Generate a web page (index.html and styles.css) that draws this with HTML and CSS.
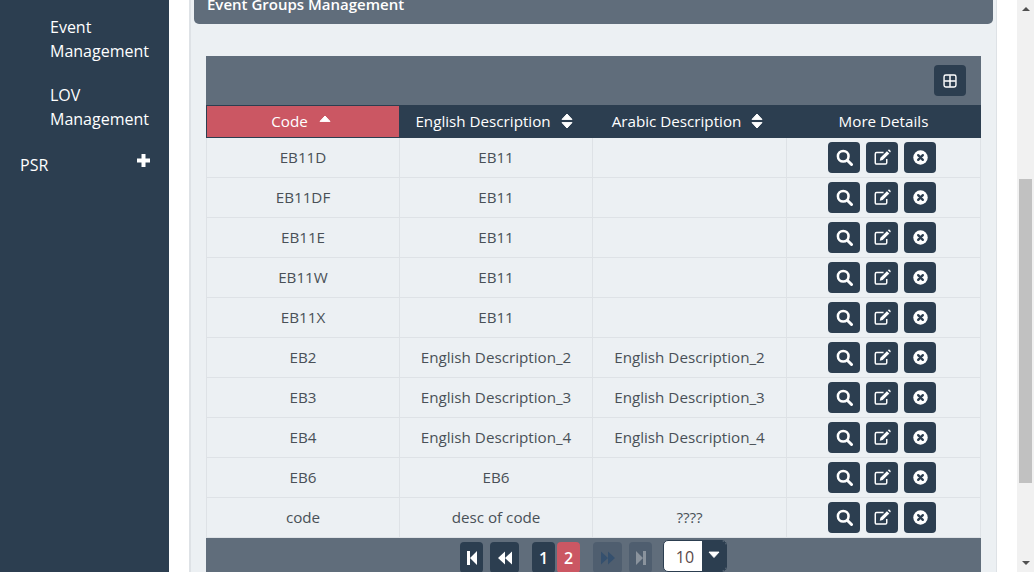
FILE: index.html
```html
<!DOCTYPE html>
<html>

<head>
    <meta name="viewport" content="width=device-width">
    <link rel="stylesheet" href="styles.css">
    <title>Event Groups Management</title>
</head>

<body>
    <svg class="defs" width="0" height="0">
        <symbol id="i-search" viewBox="0 0 16 16">
            <circle cx="6.8" cy="6.8" r="5" fill="none" stroke="currentColor" stroke-width="2.4"/>
            <path d="M10.6 10.6L14.6 14.6" stroke="currentColor" stroke-width="2.8" stroke-linecap="round"/>
        </symbol>
        <symbol id="i-edit" viewBox="0 0 16 16">
            <path d="M12 9.5V13a1.2 1.2 0 0 1-1.2 1.2H2.4A1.2 1.2 0 0 1 1.2 13V4.6a1.2 1.2 0 0 1 1.2-1.2H9" fill="none" stroke="currentColor" stroke-width="1.4"/>
            <path d="M6 8.2L12.2 2l2.2 2.2-6.2 6.2-2.8.6z" fill="currentColor"/>
            <path d="M13 1.2l.5-.4a.9.9 0 0 1 1.2 0l.8.8a.9.9 0 0 1 0 1.2l-.4.5z" fill="currentColor"/>
        </symbol>
        <symbol id="i-times" viewBox="0 0 16 16">
            <circle cx="8" cy="8" r="6.800" fill="currentColor"/>
            <path d="M5.800 5.800l4.400 4.400M10.200 5.800l-4.400 4.400" stroke="#2c3e50" stroke-width="2.2" stroke-linecap="round"/>
        </symbol>
        <symbol id="i-plus-square" viewBox="0 0 16 16">
            <rect x="1.2" y="1.2" width="13.6" height="13.6" rx="2" fill="none" stroke="currentColor" stroke-width="1.6"/>
            <path d="M8 1.5v13M1.500 8h13" stroke="currentColor" stroke-width="1.7"/>
        </symbol>
        <symbol id="i-plus" viewBox="0 0 13 13">
            <path d="M6.500 0.500v12M0.500 6.500h12" stroke="currentColor" stroke-width="4" stroke-linecap="round"/>
        </symbol>
        <symbol id="i-sort" viewBox="0 0 12 16">
            <path d="M6 1L11 6.4H1zM6 15L1 9.6H11z" fill="currentColor" stroke="currentColor" stroke-linejoin="round"/>
        </symbol>
        <symbol id="i-up" viewBox="0 0 12 8">
            <path d="M6 1L11 6.400H1z" fill="currentColor" stroke="currentColor" stroke-linejoin="round"/>
        </symbol>
        <symbol id="i-down" viewBox="0 0 12 8">
            <path d="M6 6.500L11 1.100H1z" fill="currentColor" stroke="currentColor" stroke-linejoin="round"/>
        </symbol>
        <symbol id="i-first" viewBox="0 0 12 16">
            <path d="M1 1h3v14H1zM4 8l7-7v14z" fill="currentColor"/>
        </symbol>
        <symbol id="i-prev" viewBox="0 0 16 16">
            <path d="M1 8l7-6.500V14.500zM8 8l7-6.500V14.500z" fill="currentColor"/>
        </symbol>
        <symbol id="i-next" viewBox="0 0 16 16">
            <path d="M15 8L8 1.500V14.500zM8 8L1 1.500V14.500z" fill="currentColor"/>
        </symbol>
        <symbol id="i-last" viewBox="0 0 12 16">
            <path d="M11 1H8v14h3zM8 8L1 1v14z" fill="currentColor"/>
        </symbol>
    </svg>

    <div class="page">
        <nav class="sidebar">
            <a class="sub-link">Event Management</a>
            <a class="sub-link">LOV Management</a>
            <a class="top-link">
                <span>PSR</span>
                <svg class="plus"><use href="#i-plus"/></svg>
            </a>
        </nav>

        <main class="content">
            <div class="title-bar"><span>Event Groups Management</span></div>

            <section class="grid">
                <div class="toolbar">
                    <button class="btn"><svg class="icon-sm"><use href="#i-plus-square"/></svg></button>
                </div>
                <table>
                    <colgroup>
                        <col class="col-a">
                        <col class="col-a">
                        <col class="col-b">
                        <col class="col-b">
                    </colgroup>
                    <thead>
                        <tr>
                            <th class="sorted">Code <svg class="sort-up"><use href="#i-up"/></svg></th>
                            <th class="sortable">English Description <svg class="sort"><use href="#i-sort"/></svg></th>
                            <th class="sortable">Arabic Description <svg class="sort"><use href="#i-sort"/></svg></th>
                            <th>More Details</th>
                        </tr>
                    </thead>
                    <tbody id="rows"></tbody>
                </table>
                <div class="pager">
                    <button class="pg pg-first"><svg class="pg-icon-s"><use href="#i-first"/></svg></button>
                    <button class="pg pg-prev"><svg class="pg-icon"><use href="#i-prev"/></svg></button>
                    <button class="pg pg-num">1</button>
                    <button class="pg pg-num active">2</button>
                    <button class="pg pg-next" disabled><svg class="pg-icon"><use href="#i-next"/></svg></button>
                    <button class="pg pg-last" disabled><svg class="pg-icon-s"><use href="#i-last"/></svg></button>
                    <div class="per-page">
                        <span class="per-value">10</span>
                        <span class="per-arrow"><svg class="caret"><use href="#i-down"/></svg></span>
                    </div>
                </div>
            </section>
        </main>

        <div class="gutter"></div>

        <div class="scrollbar">
            <span class="sb-arrow up"></span>
            <div class="sb-track"><div class="sb-thumb"></div></div>
            <span class="sb-arrow down"></span>
        </div>
    </div>

    <script>
        var data = [
            ['EB11D', 'EB11', ''],
            ['EB11DF', 'EB11', ''],
            ['EB11E', 'EB11', ''],
            ['EB11W', 'EB11', ''],
            ['EB11X', 'EB11', ''],
            ['EB2', 'English Description_2', 'English Description_2'],
            ['EB3', 'English Description_3', 'English Description_3'],
            ['EB4', 'English Description_4', 'English Description_4'],
            ['EB6', 'EB6', ''],
            ['code', 'desc of code', '????']
        ];
        var actions = ['i-search', 'i-edit', 'i-times'].map(function (id) {
            return '<button class="btn"><svg class="icon"><use href="#' + id + '"/></svg></button>';
        }).join('');
        document.getElementById('rows').innerHTML = data.map(function (row) {
            return '<tr><td>' + row[0] + '</td><td>' + row[1] + '</td><td>' + row[2] + '</td>' +
                '<td class="actions-cell"><div class="actions">' + actions + '</div></td></tr>';
        }).join('');
    </script>
</body>

</html>
```

FILE: styles.css
```css
html, body {
    margin: 0;
    height: 572px;
    overflow: hidden;
}

body {
    font-family: "Open Sans", sans-serif;
    font-size: 16px;
    color: #495057;
    background: #fff;
}

.defs {
    display: block;
    height: 0;
}

.page {
    display: flex;
    height: 572px;
}

/* sidebar */
.sidebar {
    flex: 0 0 169px;
    box-sizing: border-box;
    padding-top: 15px;
    margin-right: 20px;
    background: #2c3e50;
    color: #fff;
    line-height: 24px;
}

.sub-link {
    display: block;
    padding: 0 15px 20px 50px;
}

.top-link {
    display: flex;
    justify-content: space-between;
    padding: 0 19px 0 20px;
    margin-top: 2px;
}

.plus {
    width: 13px;
    height: 13px;
    margin-top: 1px;
}

/* content */
.content {
    flex: 0 0 808px;
    min-width: 0;
    box-sizing: border-box;
    height: 572px;
    padding: 0 3px;
    background: #ecf0f3;
    border-left: 2px solid #dee2e6;
    border-right: 1px solid #dee2e6;
}

.title-bar {
    display: flex;
    align-items: flex-end;
    height: 24px;
    overflow: hidden;
    padding-left: 13px;
    background: #606d7b;
    border-radius: 0 0 5px 5px;
    color: #fff;
    font-weight: 600;
    font-size: 15px;
}

.title-bar span {
    line-height: 20px;
    margin-bottom: 10px;
    white-space: nowrap;
}

.grid {
    margin: 32px 12px 0;
}

.toolbar {
    display: flex;
    justify-content: flex-end;
    box-sizing: border-box;
    height: 49px;
    padding: 9px 15px 0 0;
    background: #606d7b;
}

.btn {
    display: inline-flex;
    align-items: center;
    justify-content: center;
    width: 32px;
    height: 31px;
    padding: 0;
    border: 0;
    border-radius: 4px;
    background: #2c3e50;
    color: #fff;
}

.icon {
    width: 17px;
    height: 17px;
}

.icon-sm {
    width: 14px;
    height: 14px;
}

/* table */
table {
    width: 775px;
    border-collapse: collapse;
    table-layout: fixed;
}

.col-a { width: 193px; }
.col-b { width: 194px; }

th {
    box-sizing: border-box;
    height: 32px;
    padding: 0 0 1px;
    background: #2c3e50;
    border: 1px solid #2c3e50;
    color: #fff;
    font-weight: 400;
    font-size: 15.2px;
}

th.sorted {
    padding-right: 4px;
    background: #cb5763;
}

th.sortable {
    padding-right: 4px;
}

.sort {
    width: 12px;
    height: 16px;
    margin-left: 6px;
    vertical-align: -2px;
}

.sort-up {
    width: 12px;
    height: 8px;
    margin-left: 7px;
    vertical-align: 4px;
}

td {
    box-sizing: border-box;
    height: 40px;
    padding: 0 0 1px;
    border: 1px solid #dee2e6;
    text-align: center;
    font-size: 15.2px;
}

td.actions-cell {
    padding: 0 3px 0 0;
}

.actions {
    display: flex;
    justify-content: center;
    gap: 6px;
}

/* pager */
.pager {
    display: flex;
    align-items: flex-start;
    height: 34px;
    padding: 4px 0 0 254px;
    background: #606d7b;
}

.pg {
    display: inline-flex;
    align-items: center;
    justify-content: center;
    height: 31px;
    padding: 0;
    border: 0;
    border-radius: 4px;
    background: #2c3e50;
    color: #fff;
    font-family: inherit;
    font-size: 16px;
    font-weight: 600;
}

.pg-first { width: 23px; margin-right: 7px; }
.pg-prev { width: 29px; margin-right: 13px; }
.pg-num { width: 23px; margin-right: 2px; }
.pg-num.active { background: #cb5763; margin-right: 13px; }
.pg-next { width: 29px; margin-right: 7px; }
.pg-last { width: 23px; margin-right: 11px; }

.pg:disabled {
    background: #4f5e6f;
}

.pg-next:disabled { color: #35506e; }
.pg-last:disabled { color: #8a939d; }

.pg-icon {
    width: 16px;
    height: 16px;
}

.pg-icon-s {
    width: 12px;
    height: 16px;
}

.per-page {
    display: flex;
    width: 64px;
    height: 32px;
    margin-top: -2px;
    overflow: hidden;
    border: 1px solid #2c3e50;
    border-radius: 5px;
    box-sizing: border-box;
    background: #fff;
}

.per-value {
    flex: 1;
    padding-left: 4px;
    text-align: center;
    color: #5a4a4a;
    font-size: 16px;
    line-height: 32px;
}

.per-arrow {
    display: flex;
    justify-content: center;
    width: 24px;
    padding-top: 10px;
    box-sizing: border-box;
    background: #2c3e50;
    color: #fff;
}

.caret {
    width: 12px;
    height: 8px;
}

/* window scrollbar */
.gutter {
    flex: 0 0 20px;
}

.scrollbar {
    flex: 0 0 17px;
    display: flex;
    flex-direction: column;
    align-items: center;
    height: 572px;
    background: #f1f1f1;
}

.sb-arrow {
    flex: none;
    width: 0;
    height: 0;
    border-left: 4px solid transparent;
    border-right: 4px solid transparent;
}

.sb-arrow.up {
    margin: 7px 0 6px;
    border-bottom: 4px solid #505050;
}

.sb-arrow.down {
    margin: 6px 0 7px;
    border-top: 4px solid #505050;
}

.sb-track {
    flex: 1;
    align-self: stretch;
    padding: 162px 2px 0;
}

.sb-thumb {
    height: 304px;
    background: #c1c1c1;
}
```
